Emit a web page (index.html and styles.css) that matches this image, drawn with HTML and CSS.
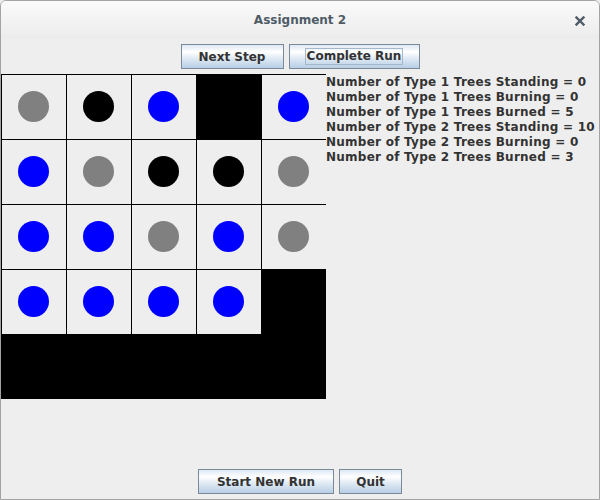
FILE: index.html
```html
<!DOCTYPE html>
<html>
<head>
<meta charset="utf-8">
<link rel="stylesheet" href="styles.css">
</head>
<body>
<div class="window">
  <div class="titlebar">
    <span class="title">Assignment 2</span>
    <svg class="close" width="10" height="10" viewBox="0 0 10 10"><path d="M1.5 1.5 L8.5 8.5 M8.5 1.5 L1.5 8.5" stroke="#4f5c67" stroke-width="2.4" stroke-linecap="square"/></svg>
  </div>
  <div class="content">
    <div class="toolbar">
      <button class="btn btn-next">Next Step</button>
      <button class="btn btn-complete"><span class="focus">Complete Run</span></button>
    </div>
    <div class="main">
      <div class="grid">
        <div class="cell"><div class="tree gray"></div></div>
        <div class="cell"><div class="tree black"></div></div>
        <div class="cell"><div class="tree blue"></div></div>
        <div class="cell burned"></div>
        <div class="cell"><div class="tree blue"></div></div>

        <div class="cell"><div class="tree blue"></div></div>
        <div class="cell"><div class="tree gray"></div></div>
        <div class="cell"><div class="tree black"></div></div>
        <div class="cell"><div class="tree black"></div></div>
        <div class="cell"><div class="tree gray"></div></div>

        <div class="cell"><div class="tree blue"></div></div>
        <div class="cell"><div class="tree blue"></div></div>
        <div class="cell"><div class="tree gray"></div></div>
        <div class="cell"><div class="tree blue"></div></div>
        <div class="cell"><div class="tree gray"></div></div>

        <div class="cell"><div class="tree blue"></div></div>
        <div class="cell"><div class="tree blue"></div></div>
        <div class="cell"><div class="tree blue"></div></div>
        <div class="cell"><div class="tree blue"></div></div>
        <div class="cell burned"></div>

        <div class="cell burned"></div>
        <div class="cell burned"></div>
        <div class="cell burned"></div>
        <div class="cell burned"></div>
        <div class="cell burned"></div>
      </div>
      <div class="stats">
        <div>Number of Type 1 Trees Standing = 0</div>
        <div>Number of Type 1 Trees Burning = 0</div>
        <div>Number of Type 1 Trees Burned = 5</div>
        <div>Number of Type 2 Trees Standing = 10</div>
        <div>Number of Type 2 Trees Burning = 0</div>
        <div>Number of Type 2 Trees Burned = 3</div>
      </div>
    </div>
    <div class="bottombar">
      <button class="btn btn-start">Start New Run</button>
      <button class="btn btn-quit">Quit</button>
    </div>
  </div>
</div>
</body>
</html>
```

FILE: styles.css
```css
html, body {
  margin: 0;
  padding: 0;
  background: #eeeeee;
}

.window {
  box-sizing: border-box;
  width: 600px;
  height: 500px;
  border: 1px solid #a3a3a3;
  border-radius: 6px 6px 0 0;
  background: #eeeeee;
  display: flex;
  flex-direction: column;
  overflow: hidden;
  font-family: "DejaVu Sans", sans-serif;
}

.titlebar {
  height: 38px;
  flex: none;
  background: linear-gradient(to bottom, #fafafa, #ececec);
  display: flex;
  align-items: center;
  justify-content: center;
  position: relative;
}

.title {
  font-size: 12px;
  font-weight: bold;
  color: #4f5c67;
  margin-bottom: 1px;
}

.close {
  position: absolute;
  right: 14px;
  top: 15px;
}

.content {
  flex: 1;
  display: flex;
  flex-direction: column;
}

.toolbar,
.bottombar {
  display: flex;
  justify-content: center;
  gap: 5px;
  padding: 5px 0;
  flex: none;
}

.btn {
  box-sizing: border-box;
  height: 25px;
  margin: 0;
  padding: 0;
  border: 1px solid #7a8a99;
  border-radius: 0;
  background: linear-gradient(to bottom, #dde8f3 0%, #ffffff 30%, #dde8f3 60%, #b8cfe5 100%);
  font-family: "DejaVu Sans", sans-serif;
  font-size: 12px;
  font-weight: bold;
  color: #333333;
  display: flex;
  align-items: center;
  justify-content: center;
}

.btn-next { width: 103px; }
.btn-complete { width: 131px; }
.btn-start { width: 136px; }
.btn-quit { width: 63px; }

.focus {
  border: 1px solid #a3b8cc;
  padding: 0 1px;
  line-height: 15px;
}

.main {
  flex: 1;
  display: flex;
  align-items: flex-start;
}

.grid {
  display: grid;
  grid-template-columns: repeat(5, 65px);
  grid-auto-rows: 65px;
  flex: none;
}

.cell {
  box-sizing: border-box;
  border-top: 1px solid #000000;
  border-left: 1px solid #000000;
  background: #eeeeee;
  padding: 16px 0 0 16px;
}

.cell.burned {
  background: #000000;
}

.tree {
  width: 31px;
  height: 31px;
  border-radius: 50%;
}

.tree.gray { background: #808080; }
.tree.black { background: #000000; }
.tree.blue { background: #0000ff; }

.stats {
  font-size: 12px;
  font-weight: bold;
  color: #333333;
  line-height: 15px;
  letter-spacing: 0.25px;
  padding-top: 1px;
  white-space: nowrap;
}
```
